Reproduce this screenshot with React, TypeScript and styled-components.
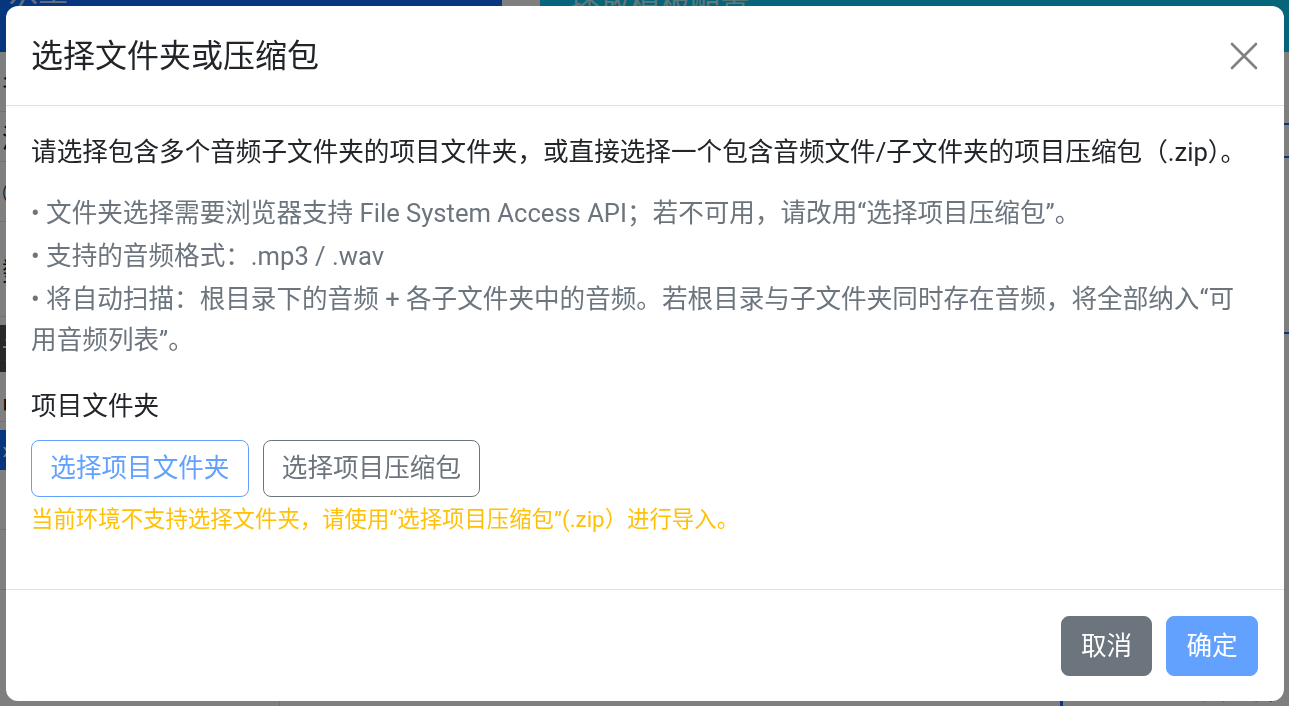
import React from 'react';
import styled, { createGlobalStyle } from 'styled-components';

const GlobalStyle = createGlobalStyle`
  html, body {
    margin: 0;
    padding: 0;
    height: 100%;
    overflow: hidden;
  }
  body {
    font-family: Roboto, "Noto Sans CJK SC", "Noto Sans", sans-serif;
    color: #212529;
    background: #ffffff;
  }
  * {
    box-sizing: border-box;
  }
`;

/* ---------- page behind the modal ---------- */

const Page = styled.div`
  height: 100vh;
  display: flex;
  flex-direction: column;
  background: #ffffff;
`;

const TopBar = styled.header`
  display: flex;
  height: 52px;
  flex-shrink: 0;
`;

const BarSection = styled.div<{ $bg: string; $width?: number }>`
  background: ${({ $bg }) => $bg};
  width: ${({ $width }) => ($width ? `${$width}px` : 'auto')};
  flex: ${({ $width }) => ($width ? 'none' : '1')};
  color: rgba(255, 255, 255, 0.75);
  font-size: 30px;
  line-height: 10px;
  padding-left: ${({ $width }) => ($width ? '8px' : '30px')};
  overflow: hidden;
  white-space: nowrap;
`;

const Content = styled.div`
  flex: 1;
  display: grid;
  grid-template-columns: 280px 1fr;
`;

const Sidebar = styled.aside`
  display: flex;
  flex-direction: column;
  border-right: 1px solid #dee2e6;
`;

const SideItem = styled.div<{ $tone?: 'dark' | 'primary'; $h: number }>`
  height: ${({ $h }) => $h}px;
  margin: ${({ $tone }) => ($tone ? '8px 0 0' : '0')};
  display: flex;
  align-items: center;
  padding-left: 2px;
  font-size: 26px;
  color: ${({ $tone }) => ($tone ? '#ffffff' : '#111111')};
  background: ${({ $tone }) =>
    $tone === 'dark' ? '#505050' : $tone === 'primary' ? '#0d6efd' : 'transparent'};
  border-bottom: ${({ $tone }) => ($tone ? 'none' : '1px solid #dee2e6')};
`;

const Main = styled.main`
  display: flex;
  flex-direction: column;
  padding-top: 8px;
`;

const MainRow = styled.div<{ $line?: string; $h: number }>`
  height: ${({ $h }) => $h}px;
  border-bottom: 2px solid ${({ $line }) => $line || 'transparent'};
`;

const MainFooter = styled.div`
  margin-top: auto;
  height: 40px;
  display: flex;
  justify-content: flex-end;
  align-items: flex-end;
  padding-right: 10px;
  font-size: 26px;
  color: #111111;
  border-left: 3px solid #0d6efd;
  margin-left: 780px;
`;

/* ---------- modal ---------- */

const Backdrop = styled.div`
  position: fixed;
  inset: 0;
  background: rgba(0, 0, 0, 0.5);
`;

const ModalLayer = styled.div`
  position: fixed;
  inset: 0;
  display: flex;
  justify-content: center;
  align-items: flex-start;
  padding-top: 6px;
`;

const Dialog = styled.div`
  width: 1278px;
  background: #ffffff;
  border-radius: 12px;
  display: flex;
  flex-direction: column;
  overflow: hidden;
`;

const Header = styled.div`
  display: flex;
  align-items: center;
  justify-content: space-between;
  padding: 25.6px;
  border-bottom: 1px solid #dee2e6;
`;

const Title = styled.h5`
  margin: 0;
  font-size: 32px;
  line-height: 48px;
  font-weight: 400;
  color: #212529;
`;

const CloseButton = styled.button`
  border: 0;
  background: transparent;
  padding: 0;
  width: 28px;
  height: 28px;
  display: flex;
  cursor: pointer;
`;

const Body = styled.div`
  padding: 25.6px;
`;

const Lead = styled.p`
  margin: 0 0 20.5px;
  font-size: 25.6px;
  line-height: 41px;
  color: #212529;
`;

const Notes = styled.div`
  margin-bottom: 24.4px;
  color: #6c757d;
  font-size: 25.6px;
  line-height: 41px;
`;

const Note = styled.div`
  & + & {
    margin-top: 2px;
  }
`;

const Field = styled.div`
  margin-bottom: 27px;
`;

const Label = styled.div`
  font-size: 25.6px;
  line-height: 41px;
  margin-bottom: 13.5px;
  color: #212529;
`;

const ButtonRow = styled.div`
  display: flex;
  gap: 14px;
`;

const tones = {
  primary: '#62a1fe',
  secondary: '#6c757d',
};

const OutlineButton = styled.button<{ $tone: keyof typeof tones }>`
  height: 57px;
  padding: 0 18.2px;
  font-family: inherit;
  font-size: 25.6px;
  line-height: 38.4px;
  border-radius: 8px;
  background: #ffffff;
  border: 1px solid ${({ $tone }) => tones[$tone]};
  color: ${({ $tone }) => tones[$tone]};
  cursor: pointer;
`;

const Hint = styled.div`
  margin-top: 6px;
  color: #ffc107;
  font-size: 22.4px;
  line-height: 33.6px;
`;

const Footer = styled.div`
  display: flex;
  justify-content: flex-end;
  gap: 14px;
  padding: 25.6px;
  border-top: 1px solid #dee2e6;
`;

const SolidButton = styled.button<{ $bg: string }>`
  height: 59.6px;
  padding: 0 19.2px;
  font-family: inherit;
  font-size: 25.6px;
  line-height: 38.4px;
  border-radius: 8px;
  border: 1px solid ${({ $bg }) => $bg};
  background: ${({ $bg }) => $bg};
  color: #ffffff;
  cursor: pointer;
`;

const CloseIcon = () => (
  <svg width="28" height="28" viewBox="0 0 28 28">
    <path
      d="M2 2 L26 26 M26 2 L2 26"
      stroke="#808080"
      strokeWidth="2.6"
      strokeLinecap="round"
      fill="none"
    />
  </svg>
);

const App = () => {
  return (
    <>
      <GlobalStyle />
      <Page>
        <TopBar>
          <BarSection $bg="#0d6efd" $width={502}>
            公告
          </BarSection>
          <BarSection $bg="#ffffff" $width={38} />
          <BarSection $bg="#0dcaf0">播放模板配置</BarSection>
        </TopBar>
        <Content>
          <Sidebar>
            <SideItem $h={60}>名</SideItem>
            <SideItem $h={50}>深</SideItem>
            <SideItem $h={60}>○</SideItem>
            <SideItem $h={95}>数</SideItem>
            <SideItem $h={47} $tone="dark">设</SideItem>
            <SideItem $h={50}>品</SideItem>
            <SideItem $h={40} $tone="primary">›</SideItem>
            <SideItem $h={60} />
            <SideItem $h={60} />
          </Sidebar>
          <Main>
            <MainRow $h={65} $line="#0d6efd" />
            <MainRow $h={33} $line="#0d6efd" />
            <MainRow $h={176} $line="#0d6efd" />
            <MainFooter>公共选并</MainFooter>
          </Main>
        </Content>
      </Page>

      <Backdrop />
      <ModalLayer>
        <Dialog role="dialog" aria-modal="true">
          <Header>
            <Title>选择文件夹或压缩包</Title>
            <CloseButton aria-label="关闭">
              <CloseIcon />
            </CloseButton>
          </Header>
          <Body>
            <Lead>
              请选择包含多个音频子文件夹的项目文件夹，或直接选择一个包含音频文件/子文件夹的项目压缩包（.zip）。
            </Lead>
            <Notes>
              <Note>• 文件夹选择需要浏览器支持 File System Access API；若不可用，请改用“选择项目压缩包”。</Note>
              <Note>• 支持的音频格式：.mp3 / .wav</Note>
              <Note>
                • 将自动扫描：根目录下的音频 + 各子文件夹中的音频。若根目录与子文件夹同时存在音频，将全部纳入“可用音频列表”。
              </Note>
            </Notes>
            <Field>
              <Label>项目文件夹</Label>
              <ButtonRow>
                <OutlineButton $tone="primary">选择项目文件夹</OutlineButton>
                <OutlineButton $tone="secondary">选择项目压缩包</OutlineButton>
              </ButtonRow>
              <Hint>当前环境不支持选择文件夹，请使用“选择项目压缩包”(.zip）进行导入。</Hint>
            </Field>
          </Body>
          <Footer>
            <SolidButton $bg="#6c757d">取消</SolidButton>
            <SolidButton $bg="#62a1fe">确定</SolidButton>
          </Footer>
        </Dialog>
      </ModalLayer>
    </>
  );
};

export default App;
